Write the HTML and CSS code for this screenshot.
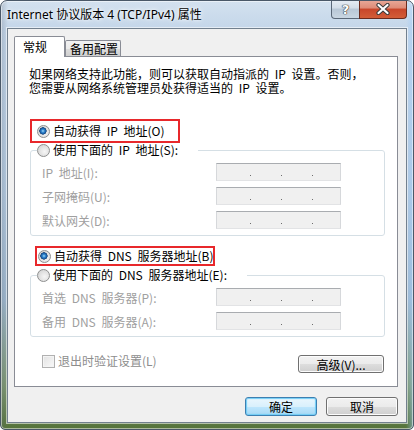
FILE: index.html
```html
<!DOCTYPE html>
<html lang="zh-CN">
<head>
  <meta charset="UTF-8" />
  <title>Internet 协议版本 4 (TCP/IPv4) 属性</title>
  <link rel="stylesheet" href="styles.css">
</head>
<body>
  <div class="window">
    <div class="titlebar">
      <span class="title">Internet 协议版本 4 (TCP/IPv4) 属性</span>
      <div class="caption">
        <span class="cap-btn help">?</span>
        <span class="cap-btn close">
          <svg width="16" height="12" viewBox="0 0 16 12">
            <path d="M3.5 2 L12.5 10 M12.5 2 L3.5 10" stroke="#3b3b3b" stroke-width="4.2" stroke-linecap="round"/>
            <path d="M3.5 2 L12.5 10 M12.5 2 L3.5 10" stroke="#fff" stroke-width="2.2" stroke-linecap="round"/>
          </svg>
        </span>
      </div>
    </div>

    <div class="client">
      <div class="tabs">
        <div class="tab active">常规</div>
        <div class="tab">备用配置</div>
      </div>

      <div class="panel">
        <p class="intro">如果网络支持此功能，则可以获取自动指派的 IP 设置。否则，<br>您需要从网络系统管理员处获得适当的 IP 设置。</p>

        <div class="mark mark-ip">
          <label class="option"><span class="radio checked"></span>自动获得 IP 地址(O)</label>
        </div>
        <fieldset class="group">
          <legend class="option"><span class="radio"></span>使用下面的 IP 地址(S):</legend>
          <div class="field"><span class="label">IP 地址(I):</span><span class="ipbox"><i></i><i></i><i></i></span></div>
          <div class="field"><span class="label">子网掩码(U):</span><span class="ipbox"><i></i><i></i><i></i></span></div>
          <div class="field"><span class="label">默认网关(D):</span><span class="ipbox"><i></i><i></i><i></i></span></div>
        </fieldset>

        <div class="mark mark-dns">
          <label class="option"><span class="radio checked"></span>自动获得 DNS 服务器地址(B)</label>
        </div>
        <fieldset class="group group-dns">
          <legend class="option"><span class="radio"></span>使用下面的 DNS 服务器地址(E):</legend>
          <div class="field"><span class="label">首选 DNS 服务器(P):</span><span class="ipbox"><i></i><i></i><i></i></span></div>
          <div class="field"><span class="label">备用 DNS 服务器(A):</span><span class="ipbox"><i></i><i></i><i></i></span></div>
        </fieldset>

        <div class="panel-foot">
          <label class="check"><span class="box"></span>退出时验证设置(L)</label>
          <button class="button advanced">高级(V)...</button>
        </div>
      </div>

      <div class="actions">
        <button class="button default">确定</button>
        <button class="button">取消</button>
      </div>
    </div>
  </div>
</body>
</html>
```

FILE: styles.css
```css
body {
  margin: 0;
  font-family: "Noto Sans CJK SC", sans-serif;
  font-size: 12px;
  color: #000;
}
.window {
  width: 414px;
  height: 430px;
  box-sizing: border-box;
  overflow: hidden;
  border: 1px solid #4a5868;
  border-radius: 7px 7px 5px 5px;
  background:
    linear-gradient(to right, rgba(90, 100, 115, .25) 0, transparent 7px, transparent calc(100% - 7px), rgba(150, 200, 255, .45) 100%),
    linear-gradient(to bottom, #d3e1ef 0, #c4d6e9 28px, #b3c9df 45%, #9fb8cf 70%, #7d9870 90%, #55733a 100%);
  box-shadow: inset 0 0 0 1px rgba(255, 255, 255, .5);
}
.titlebar {
  display: flex;
  align-items: flex-start;
  height: 27px;
}
.title {
  font-family: "Noto Sans", "Noto Sans CJK SC", sans-serif;
  font-size: 12px;
  line-height: 27px;
  padding-left: 6px;
  text-shadow: 0 0 6px #fff, 0 0 3px #fff;
}
.caption {
  display: flex;
  margin-left: auto;
  margin-right: 6px;
  margin-top: -1px;
}
.cap-btn {
  display: flex;
  align-items: center;
  justify-content: center;
  height: 19px;
  box-sizing: border-box;
  border: 1px solid #5a6878;
  border-top: none;
}
.help {
  width: 29px;
  border-radius: 0 0 0 4px;
  background: linear-gradient(#e6edf4 0, #d3dde8 45%, #b8c7d6 50%, #c9d6e2 100%);
  color: #fff;
  font-family: "DejaVu Sans", sans-serif;
  font-weight: bold;
  font-size: 13px;
  text-shadow: 0 0 1px #333, 0 0 1px #333, 0 0 1px #333;
}
.close {
  width: 48px;
  margin-left: -1px;
  border-color: #6b2b1e;
  border-radius: 0 0 4px 0;
  background: linear-gradient(#e9aa9a 0, #de8b76 45%, #c8462a 50%, #d35d38 100%);
}
.client {
  margin: 0 6px;
  padding: 7px 8px 6px 6px;
  background: #f0f0f0;
  border: 1px solid #72808e;
  box-shadow: 0 0 0 1px rgba(255, 255, 255, .55);
}
.tabs {
  display: flex;
  align-items: flex-end;
  height: 20px;
}
.tab {
  box-sizing: border-box;
  border: 1px solid #898c95;
  border-bottom: none;
  border-radius: 2px 2px 0 0;
}
.tab.active {
  position: relative;
  z-index: 1;
  width: 51px;
  height: 21px;
  margin-bottom: -1px;
  padding: 2px 0 0 8px;
  line-height: 15px;
  background: #fff;
}
.tab:not(.active) {
  width: 56px;
  height: 16px;
  padding: 1px 0 0 4px;
  line-height: 14px;
  background: linear-gradient(#f2f2f2 0, #ebebeb 50%, #dddddd 51%, #cfcfcf 100%);
}
.panel {
  background: #fff;
  border: 1px solid #898c95;
  padding: 10px 0 13px 0;
  word-spacing: 3px;
}
.intro {
  margin: 0 0 0 14px;
  line-height: 14px;
  white-space: nowrap;
}
.mark {
  box-sizing: border-box;
  display: flex;
  align-items: center;
  border: 2px solid #e8282b;
}
.mark-ip {
  width: 150px;
  height: 24px;
  margin: 24px 0 0 15px;
  padding-left: 5px;
}
.mark-dns {
  width: 180px;
  height: 20px;
  margin: 10px 0 0 20px;
  padding-left: 1px;
}
.option {
  display: flex;
  align-items: center;
  white-space: nowrap;
  line-height: 14px;
}
.radio {
  flex: none;
  width: 13px;
  height: 13px;
  box-sizing: border-box;
  margin-right: 3px;
  border-radius: 50%;
  border: 1px solid #8e8f8f;
  background: radial-gradient(circle at 60% 60%, #f6f6f6 0, #dedede 60%, #cacaca 100%);
}
.radio.checked {
  background:
    radial-gradient(circle at 45% 45%, #b9e4fb 0, #3c93d8 1.2px, #1c63ad 2.6px, #123f72 3.4px, transparent 3.9px),
    radial-gradient(circle at 60% 60%, #f6f6f6 0, #dedede 60%, #cacaca 100%);
}
.group {
  margin: 0 12px 0 15px;
  padding: 0 0 6px 6px;
  border: 1px solid #d5dfe5;
  border-radius: 3px;
  min-width: 0;
}
.group-dns {
  margin-top: 2px;
}
.group legend {
  padding: 0 20px 0 0;
  height: 14px;
}
.field {
  display: flex;
  align-items: center;
  height: 18px;
  margin: 6px 0 0 5px;
}
.label {
  width: 174px;
  color: #a0a0a0;
  white-space: nowrap;
}
.ipbox {
  display: flex;
  align-items: flex-end;
  gap: 30px;
  width: 125px;
  height: 18px;
  box-sizing: border-box;
  padding: 0 0 4px 33px;
  border: 1px solid;
  border-color: #a9acb0 #d6d8db #e2e3e5 #d6d8db;
  background: #f0f0f0;
}
.ipbox i {
  width: 1px;
  height: 1px;
  background: #6d6d6d;
}
.panel-foot {
  display: flex;
  justify-content: space-between;
  align-items: flex-start;
  margin: 17px 13px 0 27px;
}
.check {
  display: flex;
  align-items: center;
  height: 14px;
  line-height: 14px;
  color: #8d8d8d;
}
.box {
  width: 13px;
  height: 13px;
  box-sizing: border-box;
  margin-right: 3px;
  border: 1px solid #b1b1b1;
  background: linear-gradient(135deg, #e2e2e2, #f9f9f9);
  box-shadow: inset 0 0 0 1px #f4f4f4;
}
.button {
  box-sizing: border-box;
  padding: 0;
  font-family: "Noto Sans CJK SC", sans-serif;
  font-size: 12px;
  color: #000;
  border: 1px solid #707070;
  border-radius: 3px;
  background: linear-gradient(#f2f2f2 0, #ebebeb 50%, #dddddd 51%, #cfcfcf 100%);
  box-shadow: inset 0 0 0 1px #fcfcfc;
}
.advanced {
  width: 86px;
  height: 18px;
  margin-top: 1px;
  line-height: 15px;
  word-spacing: 0;
}
.actions {
  display: flex;
  justify-content: flex-end;
  gap: 9px;
  margin-top: 10px;
}
.actions .button {
  width: 72px;
  height: 19px;
  line-height: 16px;
}
.button.default {
  border-color: #3c7fb1;
  background: linear-gradient(#eaf6fd 0, #d9f0fc 50%, #bee6fd 51%, #a7d9f5 100%);
  box-shadow: inset 0 0 1px 1px #6fcdf5;
}
```
